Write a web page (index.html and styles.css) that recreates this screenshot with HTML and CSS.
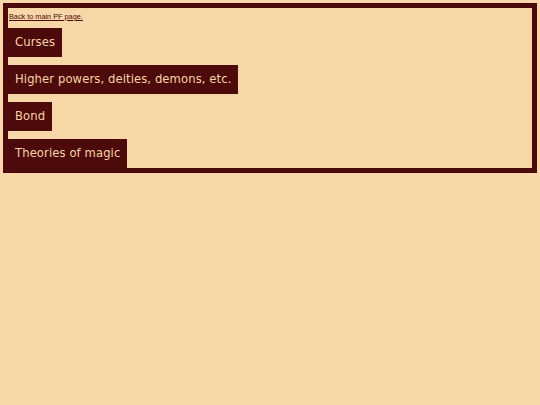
FILE: index.html
```html
<!DOCTYPE html>
<html>
<head>
<meta charset="utf-8">
<link rel="stylesheet" href="styles.css">
</head>
<body>
<div class="wrap">
  <p class="back"><a href="#">Back to main PF</a> page.</p>
  <div class="list">
    <a class="btn" href="#">Curses</a>
    <a class="btn" href="#">Higher powers, deities, demons, etc.</a>
    <a class="btn" href="#">Bond</a>
    <a class="btn" href="#">Theories of magic</a>
  </div>
</div>
</body>
</html>
```
FILE: styles.css
```css
html, body {
  margin: 0;
  padding: 0;
  background: #f7d7a7;
}
body {
  font-family: "Liberation Sans", Arial, sans-serif;
  color: #4d0a0a;
}
.wrap {
  margin: 3px;
  border: 5px solid #4d0a0a;
  padding: 0;
}
.back {
  margin: 5px 0 7px 1px;
  font-size: 7.3px;
  line-height: 8px;
  text-decoration: underline;
}
.back a {
  color: #4d0a0a;
}
.list {
  display: flex;
  flex-direction: column;
  align-items: flex-start;
  gap: 8px;
}
.btn {
  display: block;
  height: 29px;
  line-height: 29px;
  padding: 0 7px 0 7px;
  background: #4d0a0a;
  color: #f7d4a6;
  font-family: "DejaVu Sans", Verdana, sans-serif;
  font-size: 11.6px;
  letter-spacing: 0.1px;
  text-decoration: none;
  white-space: nowrap;
}
```
